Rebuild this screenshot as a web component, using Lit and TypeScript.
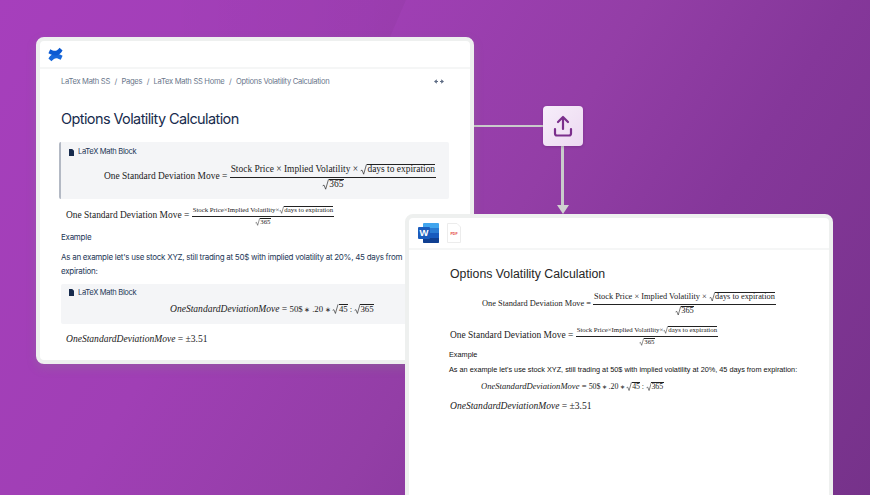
import { LitElement, html, css, svg } from "lit";
import { customElement } from "lit/decorators.js";

@customElement("m-sqrt")
class MSqrt extends LitElement {
  static styles = css`
    :host { display: inline-flex; align-items: stretch; vertical-align: baseline; line-height: 1; }
    svg { width: 0.72em; height: auto; flex: none; align-self: stretch; }
    .r { align-self: baseline; border-top: 0.07em solid currentColor; padding: 0 0.04em 0 0.02em; }
  `;
  render() {
    return html`<svg viewBox="0 0 10 16" preserveAspectRatio="none" fill="none" stroke="currentColor" stroke-width="1"><path d="M1 10 L3 9 L5.4 15 L9.6 0.4"/></svg><span class="r"><slot></slot></span>`;
  }
}

@customElement("m-frac")
class MFrac extends LitElement {
  static styles = css`
    :host { display: inline-flex; flex-direction: column; align-items: center; vertical-align: middle; line-height: 1; }
    .n { padding: 0 1px 2px; border-bottom: 1px solid currentColor; white-space: nowrap; }
    .d { padding-top: 1px; white-space: nowrap; }
  `;
  render() {
    return html`<span class="n"><slot name="n"></slot></span><span class="d"><slot name="d"></slot></span>`;
  }
}

const AST = html`<span class="ast">∗</span>`;
const FRAC_BIG = html`<m-frac>
  <span slot="n">Stock Price × Implied Volatility × <m-sqrt>days to expiration</m-sqrt></span>
  <span slot="d"><m-sqrt>365</m-sqrt></span>
</m-frac>`;
const FRAC_SMALL = html`<m-frac class="small">
  <span slot="n">Stock Price×Implied Volatility×<m-sqrt>days to expiration</m-sqrt></span>
  <span slot="d"><m-sqrt>365</m-sqrt></span>
</m-frac>`;
const EQ_VALUES = html`<i>OneStandardDeviationMove</i> = <span class="rest">50$ ${AST} .20 ${AST} <m-sqrt>45</m-sqrt> : <m-sqrt>365</m-sqrt></span>`;
const EQ_RESULT = html`<i>OneStandardDeviationMove</i> = ±3.51`;

@customElement("app-root")
class AppRoot extends LitElement {
  static styles = css`
    :host { display: block; width: 870px; height: 495px; font-family: Inter, "Liberation Sans", sans-serif; }
    .stage {
      position: relative; width: 870px; height: 495px; overflow: hidden;
      background: linear-gradient(122deg, #a63fbc 0%, #a03fb5 32%, #933ea6 55%, #85379a 72%, #76328a 100%);
    }
    .shade { position: absolute; inset: 0; width: 870px; height: 495px; }
    .card {
      position: absolute; box-sizing: border-box; background: #fff;
      border: 4px solid #eef0ef; border-radius: 8px; display: flex; flex-direction: column; overflow: hidden;
    }
    .left { left: 36px; top: 37px; width: 438px; height: 327px; color: #253858; box-shadow: 0 4px 10px rgba(130, 150, 130, 0.25); }
    .right { left: 405px; top: 214px; width: 428px; height: 290px; color: #222; }
    .head { flex: none; display: flex; align-items: center; border-bottom: 2px solid #f5f6f6; box-sizing: border-box; }
    .left .head { height: 28px; padding-left: 8px; }
    .right .head { height: 32px; padding-left: 9px; gap: 8px; }
    .body-l { padding: 6px 21px 0 21px; display: flex; flex-direction: column; }
    .crumbs { display: flex; align-items: center; font-size: 7.6px; letter-spacing: -0.3px; color: #6b778c; height: 12px; white-space: nowrap; }
    .crumbs .sep { margin: 0 4.5px; }
    .crumbs .expand { margin-left: auto; margin-right: 5px; display: flex; }
    h1 { margin: 0; font-weight: 400; white-space: nowrap; }
    .left h1 { font-size: 14.5px; letter-spacing: -0.6px; margin-top: 22px; line-height: 20px; color: #172b4d; }
    .math { font-family: "Liberation Serif", serif; white-space: nowrap; color: #222; }
    .ast { font-size: 0.75em; }
    .rest { font-size: 0.92em; word-spacing: -0.5px; }
    .block { background: #f4f5f7; border-radius: 2px; box-sizing: border-box; flex: none; }
    .b1 { margin: 13px 0 0 -2px; width: 390px; height: 57px; border-left: 2px solid #b3b9c4; padding: 5px 0 0 8px; }
    .tag { display: flex; align-items: center; gap: 4px; font-size: 7.6px; letter-spacing: -0.35px; color: #253858; line-height: 10px; }
    .b1 .math { font-size: 9.45px; margin: 7px 0 0 35px; }
    .eq2 { font-size: 9.45px; margin: 7px 0 0 5px; }
    .small { font-size: 6.8px; }
    .p { font-size: 8px; letter-spacing: -0.27px; line-height: 14px; white-space: nowrap; color: #253858; }
    .ex { margin-top: 4px; }
    .as { margin-top: 6px; }
    .b2 { margin-top: 6px; width: 400px; height: 40px; padding: 4px 0 0 8px; }
    .b2 .math { font-size: 9.55px; margin: 5px 0 0 101px; }
    .eq4 { font-size: 9.55px; margin: 9px 0 0 5px; }
    .body-r { padding: 15px 0 0 41px; display: flex; flex-direction: column; }
    .right h1 { font-family: "Liberation Sans", sans-serif; font-size: 12.3px; line-height: 18px; color: #262626; }
    .r1 { font-size: 8.35px; margin: 9px 0 0 32px; }
    .r2 { font-size: 9.45px; margin: 11px 0 0 0; }
    .rp { font-family: "Liberation Sans", sans-serif; font-size: 7.3px; line-height: 12px; color: #111; white-space: nowrap; margin-left: -1px; }
    .rex { margin-top: 3px; }
    .ras { margin-top: 3px; }
    .r3 { font-size: 8.6px; margin: 5px 0 0 31px; }
    .r4 { font-size: 9.55px; margin: 9px 0 0 0; }
    .hline { position: absolute; left: 474px; top: 125px; width: 70px; height: 2px; background: #c9cbcb; }
    .vline { position: absolute; left: 561px; top: 146px; width: 3px; height: 60px; background: #c9cbcb; }
    .arrow { position: absolute; left: 556.5px; top: 205px; width: 0; height: 0; border: 6px solid transparent; border-top: 9px solid #d0d1d1; border-bottom: 0; }
    .btn {
      position: absolute; left: 543px; top: 106px; width: 40px; height: 40px; border-radius: 4px;
      background: linear-gradient(135deg, #f7eefa, #ecd9f1); display: flex; align-items: center; justify-content: center;
      box-shadow: 0 1px 3px rgba(60, 10, 70, 0.25);
    }
  `;

  render() {
    return html`<div class="stage">
      <svg class="shade" viewBox="0 0 870 495"><defs><linearGradient id="fade" x1="0" x2="1" y1="0" y2="0"><stop offset="0.4" stop-color="#000" stop-opacity="0"/><stop offset="1" stop-color="#000" stop-opacity="0.035"/></linearGradient></defs><path d="M0 0H406L350 130H0Z" fill="url(#fade)"/></svg>
      <div class="hline"></div>
      <div class="vline"></div>
      <div class="arrow"></div>
      <div class="btn">
        <svg width="20" height="22" viewBox="0 0 20 22" fill="none" stroke="#7b2f8c" stroke-width="2.2" stroke-linecap="round" stroke-linejoin="round">
          <path d="M10 14V2M5 7l5-5 5 5"/><path d="M2 14v4.5a2 2 0 0 0 2 2h12a2 2 0 0 0 2-2V14"/>
        </svg>
      </div>

      <section class="card left">
        <div class="head">
          <svg width="15" height="15" viewBox="0 0 14 14"><path d="M0.4 10.8C3.6 5.8 6.8 4.6 13.6 8.2L11.9 12C8 10 6.4 9.6 3.2 13.4Z" fill="#1868db"/><path d="M13.6 3.2C10.4 8.2 7.2 9.4 0.4 5.8L2.1 2C6 4 7.6 4.4 10.8 0.6Z" fill="#0c5ad2"/></svg>
        </div>
        <div class="body-l">
          <div class="crumbs">
            <span>LaTex Math SS</span><span class="sep">/</span><span>Pages</span><span class="sep">/</span><span>LaTex Math SS Home</span><span class="sep">/</span><span>Options Volatility Calculation</span>
            <span class="expand"><svg width="10" height="5" viewBox="0 0 10 5" fill="#5e6c84"><path d="M0 2.5 2.8 0.2V4.8ZM10 2.5 7.2 0.2V4.8Z"/><rect x="2" y="2" width="2" height="1"/><rect x="6" y="2" width="2" height="1"/></svg></span>
          </div>
          <h1>Options Volatility Calculation</h1>
          <div class="block b1">
            <div class="tag">${this.doc()}<span>LaTeX Math Block</span></div>
            <div class="math">One Standard Deviation Move = ${FRAC_BIG}</div>
          </div>
          <div class="math eq2">One Standard Deviation Move = ${FRAC_SMALL}</div>
          <div class="p ex">Example</div>
          <div class="p as">As an example let's use stock XYZ, still trading at 50$ with implied volatility at 20%, 45 days from<br />expiration:</div>
          <div class="block b2">
            <div class="tag">${this.doc()}<span>LaTeX Math Block</span></div>
            <div class="math">${EQ_VALUES}</div>
          </div>
          <div class="math eq4">${EQ_RESULT}</div>
        </div>
      </section>

      <section class="card right">
        <div class="head">
          <svg width="21" height="20" viewBox="0 0 21 20">
            <rect x="5" y="0" width="16" height="20" rx="1" fill="#41a5ee"/><rect x="5" y="5" width="16" height="5" fill="#2b7cd3"/><rect x="5" y="10" width="16" height="5" fill="#185abd"/><path d="M5 15H21V19a1 1 0 0 1-1 1H6a1 1 0 0 1-1-1Z" fill="#103f91"/>
            <rect x="0" y="4" width="12" height="12" rx="1" fill="#1a5cbc"/>
            <text x="6" y="13.2" text-anchor="middle" font-family="Liberation Sans" font-weight="700" font-size="9.5" fill="#fff">W</text>
          </svg>
          <svg width="14" height="20" viewBox="0 0 14 20">
            <path d="M0.5 0.5H10L13.5 4V19.5H0.5Z" fill="#fff" stroke="#ececec"/>
            <text x="7" y="11.5" text-anchor="middle" font-family="Liberation Sans" font-weight="700" font-size="3.6" fill="#e5483f">PDF</text>
          </svg>
        </div>
        <div class="body-r">
          <h1>Options Volatility Calculation</h1>
          <div class="math r1">One Standard Deviation Move = ${FRAC_BIG}</div>
          <div class="math r2">One Standard Deviation Move = ${FRAC_SMALL}</div>
          <div class="rp rex">Example</div>
          <div class="rp ras">As an example let's use stock XYZ, still trading at 50$ with implied volatility at 20%, 45 days from expiration:</div>
          <div class="math r3">${EQ_VALUES}</div>
          <div class="math r4">${EQ_RESULT}</div>
        </div>
      </section>
    </div>`;
  }

  doc() {
    return svg`<svg width="5" height="7" viewBox="0 0 5 7"><path d="M0 0H3.2L5 1.8V7H0Z" fill="#172b4d"/></svg>`;
  }
}
